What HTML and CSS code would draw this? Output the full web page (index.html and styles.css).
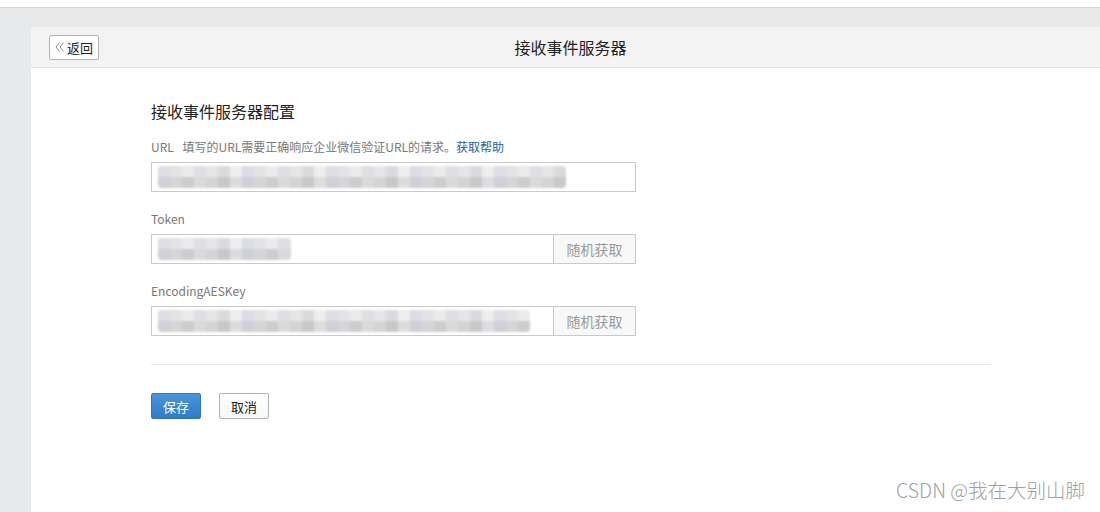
FILE: index.html
```html
<!DOCTYPE html>
<html lang="zh-CN">

<head>
  <meta charset="UTF-8">
  <meta name="viewport" content="width=device-width, initial-scale=1.0">
  <title>接收事件服务器</title>
  <link rel="stylesheet" href="styles.css">
</head>

<body>
  <div class="top__strip"></div>

  <main class="main__container">
    <section class="card">
      <header class="card__header">
        <button type="button" class="btn__back">
          <svg class="back__arrow" width="9" height="10" viewBox="0 0 9 10" fill="none" stroke="#8a8a8a" stroke-width="1">
            <path d="M4.5 0.5 L1 5 L4.5 9.5 M8.5 0.5 L5 5 L8.5 9.5" />
          </svg>返回
        </button>
        <h1 class="card__title">接收事件服务器</h1>
        <span></span>
      </header>

      <div class="card__body">
        <h2 class="form__title">接收事件服务器配置</h2>

        <form class="config__form">
          <div class="field">
            <label>URL <span class="label__tip">填写的URL需要正确响应企业微信验证URL的请求。<a href="#">获取帮助</a></span></label>
            <div class="input__box">
              <span class="mask mask--url"></span>
            </div>
          </div>

          <div class="field">
            <label>Token</label>
            <div class="input__box input__box--addon">
              <span class="mask mask--token"></span>
              <button type="button" class="btn__random">随机获取</button>
            </div>
          </div>

          <div class="field">
            <label>EncodingAESKey</label>
            <div class="input__box input__box--addon">
              <span class="mask mask--aes"></span>
              <button type="button" class="btn__random">随机获取</button>
            </div>
          </div>
        </form>

        <hr class="divider">

        <div class="actions">
          <button type="button" class="btn btn--primary">保存</button>
          <button type="button" class="btn">取消</button>
        </div>
      </div>
    </section>
  </main>

  <div class="watermark">CSDN @我在大别山脚</div>
</body>

</html>
```

FILE: styles.css
```css
:root {
  --clr-page: #e8e9eb;
  --clr-header: #f3f3f3;
  --clr-line: #dedede;
  --clr-border: #c9c9c9;
  --clr-text: #222;
  --clr-label: #787878;
  --clr-link: #2a5d9f;
  --clr-primary: #3a86cf;

  --fnt-main: "Microsoft YaHei", "Noto Sans CJK SC", sans-serif;
}

* {
  box-sizing: border-box;
  margin: 0;
  padding: 0;
}

html,
body {
  height: 100%;
}

body {
  font-family: var(--fnt-main);
  background-color: var(--clr-page);
  color: var(--clr-text);
  overflow: hidden;
  position: relative;
}

.top__strip {
  height: 8px;
  background-color: #fff;
  border-bottom: 1px solid #d6d6d6;
}

.main__container {
  padding: 19px 0 0 31px;
  height: calc(100% - 8px);
}

.card {
  height: 100%;
  background-color: #fff;
  border-top-left-radius: 3px;
  overflow: hidden;
}

.card__header {
  display: grid;
  grid-template-columns: 1fr auto 1fr;
  align-items: center;
  height: 41px;
  padding: 0 18px;
  background-color: var(--clr-header);
  border-bottom: 1px solid var(--clr-line);
}

.btn__back {
  justify-self: start;
  display: flex;
  align-items: center;
  justify-content: center;
  gap: 3px;
  height: 25px;
  width: 50px;
  font-family: var(--fnt-main);
  font-size: 13px;
  color: var(--clr-text);
  background-color: #fff;
  border: 1px solid #b3b3b3;
  border-radius: 2px;
  cursor: pointer;
}

.card__title {
  font-size: 16px;
  font-weight: 400;
  margin-left: 10px;
}

.card__body {
  padding: 33px 0 0 120px;
}

.form__title {
  font-size: 16px;
  font-weight: 400;
  line-height: 20px;
  margin-bottom: 15px;
}

.config__form {
  display: grid;
  gap: 16px;
  width: 485px;
}

.field {
  display: grid;
  gap: 4px;
}

.field label {
  font-size: 12px;
  line-height: 22px;
  color: var(--clr-label);
}

.label__tip {
  margin-left: 6px;
}

.label__tip a {
  color: var(--clr-link);
  text-decoration: none;
}

.input__box {
  display: flex;
  align-items: center;
  height: 30px;
  border: 1px solid var(--clr-border);
  padding-left: 6px;
}

.input__box--addon {
  justify-content: space-between;
}

.btn__random {
  align-self: stretch;
  width: 82px;
  font-family: var(--fnt-main);
  font-size: 14px;
  color: #9a9a9a;
  background-color: #f8f8f8;
  border: none;
  border-left: 1px solid var(--clr-border);
  cursor: pointer;
}

/* blurred values */
.mask {
  display: block;
  height: 22px;
  border-radius: 4px;
  filter: blur(0.8px);
  background:
    repeating-linear-gradient(90deg, #dcdde6 0 12px, #e3e3e5 12px 24px, #ebebed 24px 36px, #dedee3 36px 48px, #e6e6e8 48px 60px, #d9dadd 60px 72px, #eeeeef 72px 84px) top / 100% 50% no-repeat,
    repeating-linear-gradient(90deg, #cfcfd8 0 12px, #d6d6d8 12px 24px, #cdcdd0 24px 36px, #dadada 36px 48px, #d2d4d6 48px 60px, #c9c9cc 60px 72px, #dddde0 72px 84px) bottom / 100% 50% no-repeat;
}

.mask--url {
  width: 408px;
}

.mask--token {
  width: 133px;
}

.mask--aes {
  width: 372px;
}

.divider {
  width: 840px;
  border: none;
  border-top: 1px solid #e6e6e6;
  margin-top: 28px;
}

.actions {
  display: flex;
  gap: 18px;
  margin-top: 28px;
}

.btn {
  width: 50px;
  height: 26px;
  font-family: var(--fnt-main);
  font-size: 13px;
  color: var(--clr-text);
  background: linear-gradient(#fff, #f6f6f6);
  border: 1px solid #b0b0b0;
  border-radius: 2px;
  cursor: pointer;
}

.btn--primary {
  color: #fff;
  background: linear-gradient(#4b94db, #2f7cc6);
  border-color: #2f77bd;
}

.watermark {
  position: absolute;
  right: 15px;
  bottom: 8px;
  font-size: 19.5px;
  font-weight: 300;
  color: #a0a0a0;
  text-shadow: 1px 1px 0 #fff;
}
```
